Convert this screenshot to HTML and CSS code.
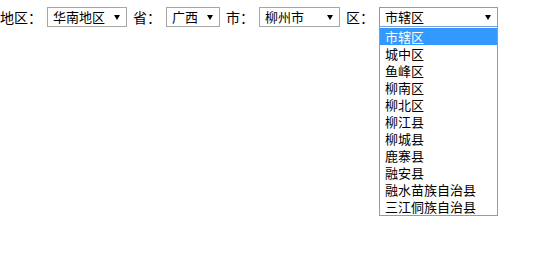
FILE: index.html
```html
<!DOCTYPE html>
<html lang="zh-CN">
  <head>
    <meta charset="UTF-8" />
    <title>地区选择</title>
    <link rel="stylesheet" href="styles.css">
  </head>
  <body>
    <div class="bar">
      <span class="label">地区：</span>
      <div class="select w-area">华南地区<i class="arrow"></i></div>
      <span class="label">省：</span>
      <div class="select w-prov">广西<i class="arrow"></i></div>
      <span class="label">市：</span>
      <div class="select w-city">柳州市<i class="arrow"></i></div>
      <span class="label">区：</span>
      <div class="picker">
        <div class="select w-dist open">市辖区<i class="arrow"></i></div>
        <!-- liste déroulante ouverte -->
        <div class="options">
          <div class="option active">市辖区</div>
          <div class="option">城中区</div>
          <div class="option">鱼峰区</div>
          <div class="option">柳南区</div>
          <div class="option">柳北区</div>
          <div class="option">柳江县</div>
          <div class="option">柳城县</div>
          <div class="option">鹿寨县</div>
          <div class="option">融安县</div>
          <div class="option">融水苗族自治县</div>
          <div class="option">三江侗族自治县</div>
        </div>
      </div>
    </div>
  </body>
</html>
```

FILE: styles.css
```css
body {
  margin: 0;
  background: #fff;
  color: #000;
  font-family: 'Noto Sans CJK SC', 'DejaVu Sans', sans-serif;
}
.bar {
  display: flex;
  align-items: flex-start;
  padding-top: 7px;
}
.label {
  font-size: 14px;
  line-height: 20px;
  margin-right: 5px;
}
.select {
  position: relative;
  box-sizing: border-box;
  height: 20px;
  border: 1px solid #a6a6a6;
  background: #fff;
  font-size: 13px;
  line-height: 18px;
  padding-left: 5px;
  margin-right: 6px;
}
.arrow {
  position: absolute;
  right: 6px;
  top: 7px;
  width: 0;
  height: 0;
  border-left: 3.5px solid transparent;
  border-right: 3.5px solid transparent;
  border-top: 5px solid #000;
}
.w-area {
  width: 80px;
}
.w-prov {
  width: 54px;
}
.w-city {
  width: 81px;
}
.w-dist {
  width: 119px;
  margin-right: 0;
}
.open {
  border-color: #7b9ed8;
}
.picker {
  display: flex;
  flex-direction: column;
  width: 119px;
}
.options {
  box-sizing: border-box;
  width: 119px;
  border: 1px solid #7b9ed8;
  border-top: none;
  padding-top: 1px;
  background: #fff;
  font-size: 13px;
}
.option {
  height: 17px;
  line-height: 17px;
  padding-left: 5px;
  white-space: nowrap;
}
.active {
  background: #3399ff;
  color: #fff;
}
```
